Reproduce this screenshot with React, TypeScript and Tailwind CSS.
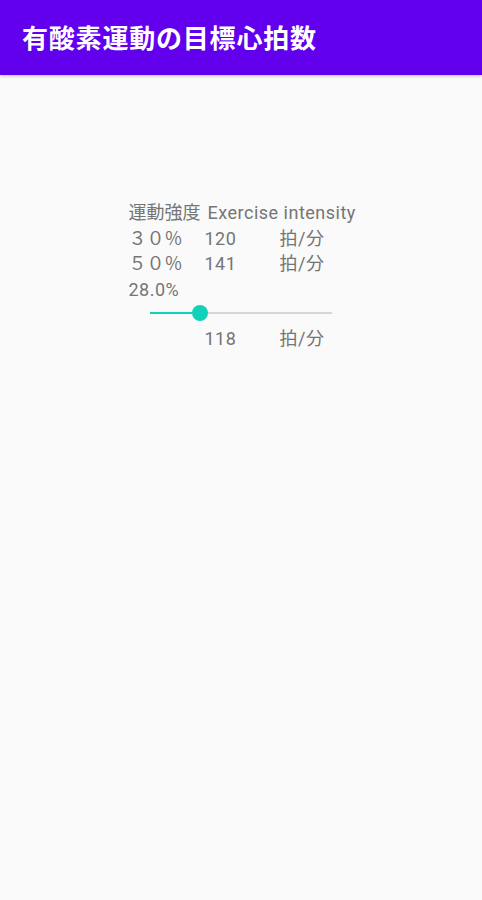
const font = { fontFamily: 'Roboto, "Noto Sans CJK JP", sans-serif' }

function Slider({ value }: { value: number }) {
  return (
    <div className="relative h-[21px] mb-[3px] mx-[21px] w-[182px] flex items-center">
      <div className="w-full h-[2px] bg-[#d6d6d6]" />
      <div className="absolute left-0 h-[2px] bg-[#10d2bb]" style={{ width: `${value}%` }} />
      <div
        className="absolute w-[16px] h-[16px] rounded-full bg-[#10d2bb] -translate-x-1/2"
        style={{ left: `${value}%` }}
      />
    </div>
  )
}

export default function App() {
  return (
    <div className="min-h-[900px] bg-[#fafafa]" style={font}>
      <div className="h-[75px] bg-[#6200ee] flex items-center px-[22px] pt-[3px] shadow-[0_1px_3px_rgba(0,0,0,0.25)]">
        <div className="text-white text-[26px] font-bold tracking-[0.8px]">有酸素運動の目標心拍数</div>
      </div>

      <div className="flex justify-center pt-[125px]">
        <div className="grid grid-cols-[76px_75px_74px] text-[18px] leading-[25.5px] tracking-[0.5px] text-[#757575]">
          <div className="tracking-normal">運動強度</div>
          <div className="col-span-2 pl-[3px] whitespace-nowrap">Exercise intensity</div>

          <div className="tracking-normal">３０％</div>
          <div>120</div>
          <div>拍/分</div>

          <div className="tracking-normal">５０％</div>
          <div>141</div>
          <div>拍/分</div>

          <div className="col-span-3">28.0%</div>

          <div className="col-span-3">
            <Slider value={28} />
          </div>

          <div />
          <div>118</div>
          <div>拍/分</div>
        </div>
      </div>
    </div>
  )
}
